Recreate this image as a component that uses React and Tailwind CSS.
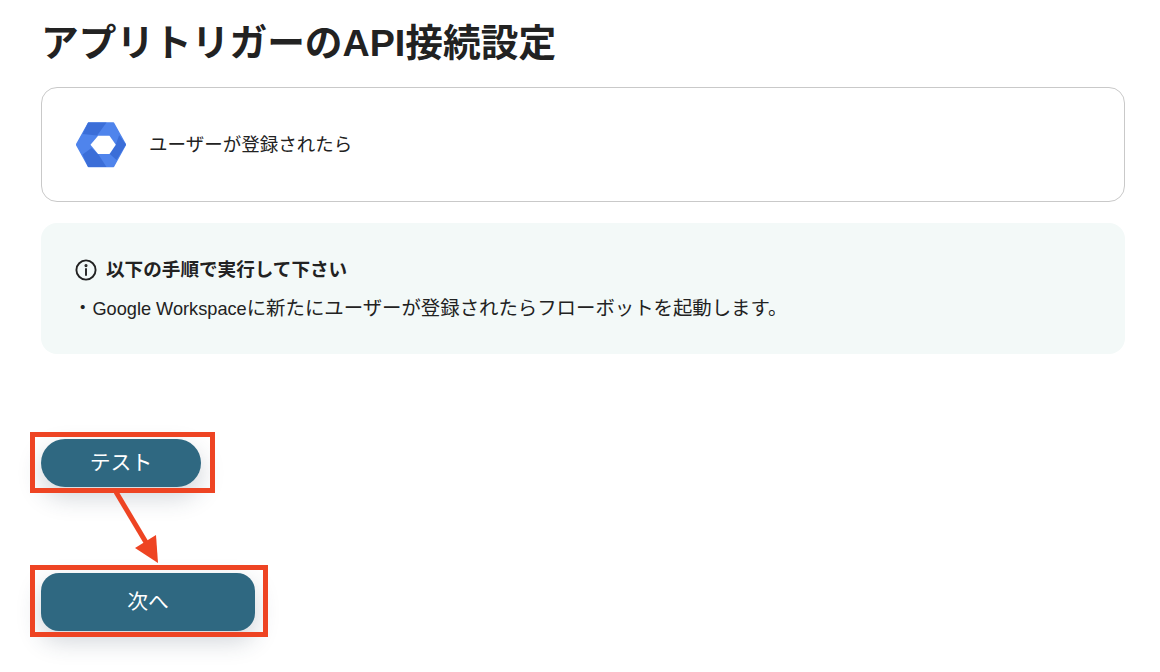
const fontStack = { fontFamily: '"Liberation Sans", "Noto Sans CJK JP", sans-serif' }

const WorkspaceLogo = () => (
	<svg width="50" height="46" viewBox="-0.5 -1 50 46">
		<path d="M12 0 L37 0 L49 21.6 L37 43.5 L12 43.5 L0 21.6 Z" fill="#4f84ec" stroke="#4f84ec" strokeWidth="1.5" strokeLinejoin="round" />
		<polygon points="11.6,-0.5 30,-0.5 20.6,12.6 6.2,11" fill="#3b6ed8" />
		<polygon points="42.6,12.3 49.5,21.6 40,37 33.3,31 39.3,21.6" fill="#3b6ed8" />
		<polygon points="15,25 21.6,31 30,44 11.6,44 6,31.6" fill="#3b6ed8" />
		<polygon points="21.6,12.7 33,12.7 39.3,21.7 33,31 21.6,31 14,21.7" fill="#ffffff" />
	</svg>
)

const InfoIcon = () => (
	<svg width="22" height="22" viewBox="0 0 22 22" fill="none" stroke="#222222" strokeWidth="1.9">
		<circle cx="11" cy="11" r="9.6" />
		<line x1="11" y1="10" x2="11" y2="16" strokeLinecap="round" />
		<circle cx="11" cy="6.6" r="0.6" fill="#222222" />
	</svg>
)

const App = () => {
	return (
		<div className="relative w-[1160px] h-[672px] overflow-hidden bg-white text-[#222222] px-[41px] pt-[18px]" style={fontStack}>
			<h1 className="text-[37.7px] leading-[50px] font-bold">アプリトリガーのAPI接続設定</h1>

			<div className="mt-[19px] w-[1084px] h-[115px] flex items-center gap-[23px] px-[34px] rounded-2xl border border-[#c9c9c9]">
				<WorkspaceLogo />
				<span className="text-[18.5px]">ユーザーが登録されたら</span>
			</div>

			<div className="mt-[21px] w-[1084px] h-[131px] rounded-2xl bg-[#f3f9f8] px-[34px] pt-[35px]">
				<div className="flex items-center gap-[9px] h-[24px]">
					<InfoIcon />
					<span className="text-[18.6px] font-bold">以下の手順で実行して下さい</span>
				</div>
				<p className="mt-[13px] text-[19.4px] leading-[26px]">
					<span className="-ml-[2px]">・</span>
					<span className="text-[18.2px]">Google Workspace</span>
					に新たにユーザーが登録されたらフローボットを起動します。
				</p>
			</div>

			<button className="block mt-[85px] w-[160px] h-[48px] rounded-full bg-[#2f6881] text-white text-[20.8px] shadow-[0_10px_24px_rgba(40,60,80,0.22)]">
				テスト
			</button>
			<button className="block mt-[86px] w-[214px] h-[58px] rounded-[18px] bg-[#2f6881] text-white text-[20.8px] shadow-[0_10px_24px_rgba(40,60,80,0.22)]">
				次へ
			</button>

			{/* annotation overlays */}
			<div className="absolute left-[30px] top-[432px] w-[185px] h-[61px] border-[5px] border-[#ee4423]"></div>
			<div className="absolute left-[30px] top-[565px] w-[238px] h-[72px] border-[5px] border-[#ee4423]"></div>
			<svg className="absolute left-[110px] top-[490px]" width="60" height="80" viewBox="0 0 60 80">
				<line x1="6" y1="2" x2="37" y2="54" stroke="#ee4423" strokeWidth="5" />
				<polygon points="25,58 46,45 48,73" fill="#ee4423" />
			</svg>
		</div>
	)
}

export default App
